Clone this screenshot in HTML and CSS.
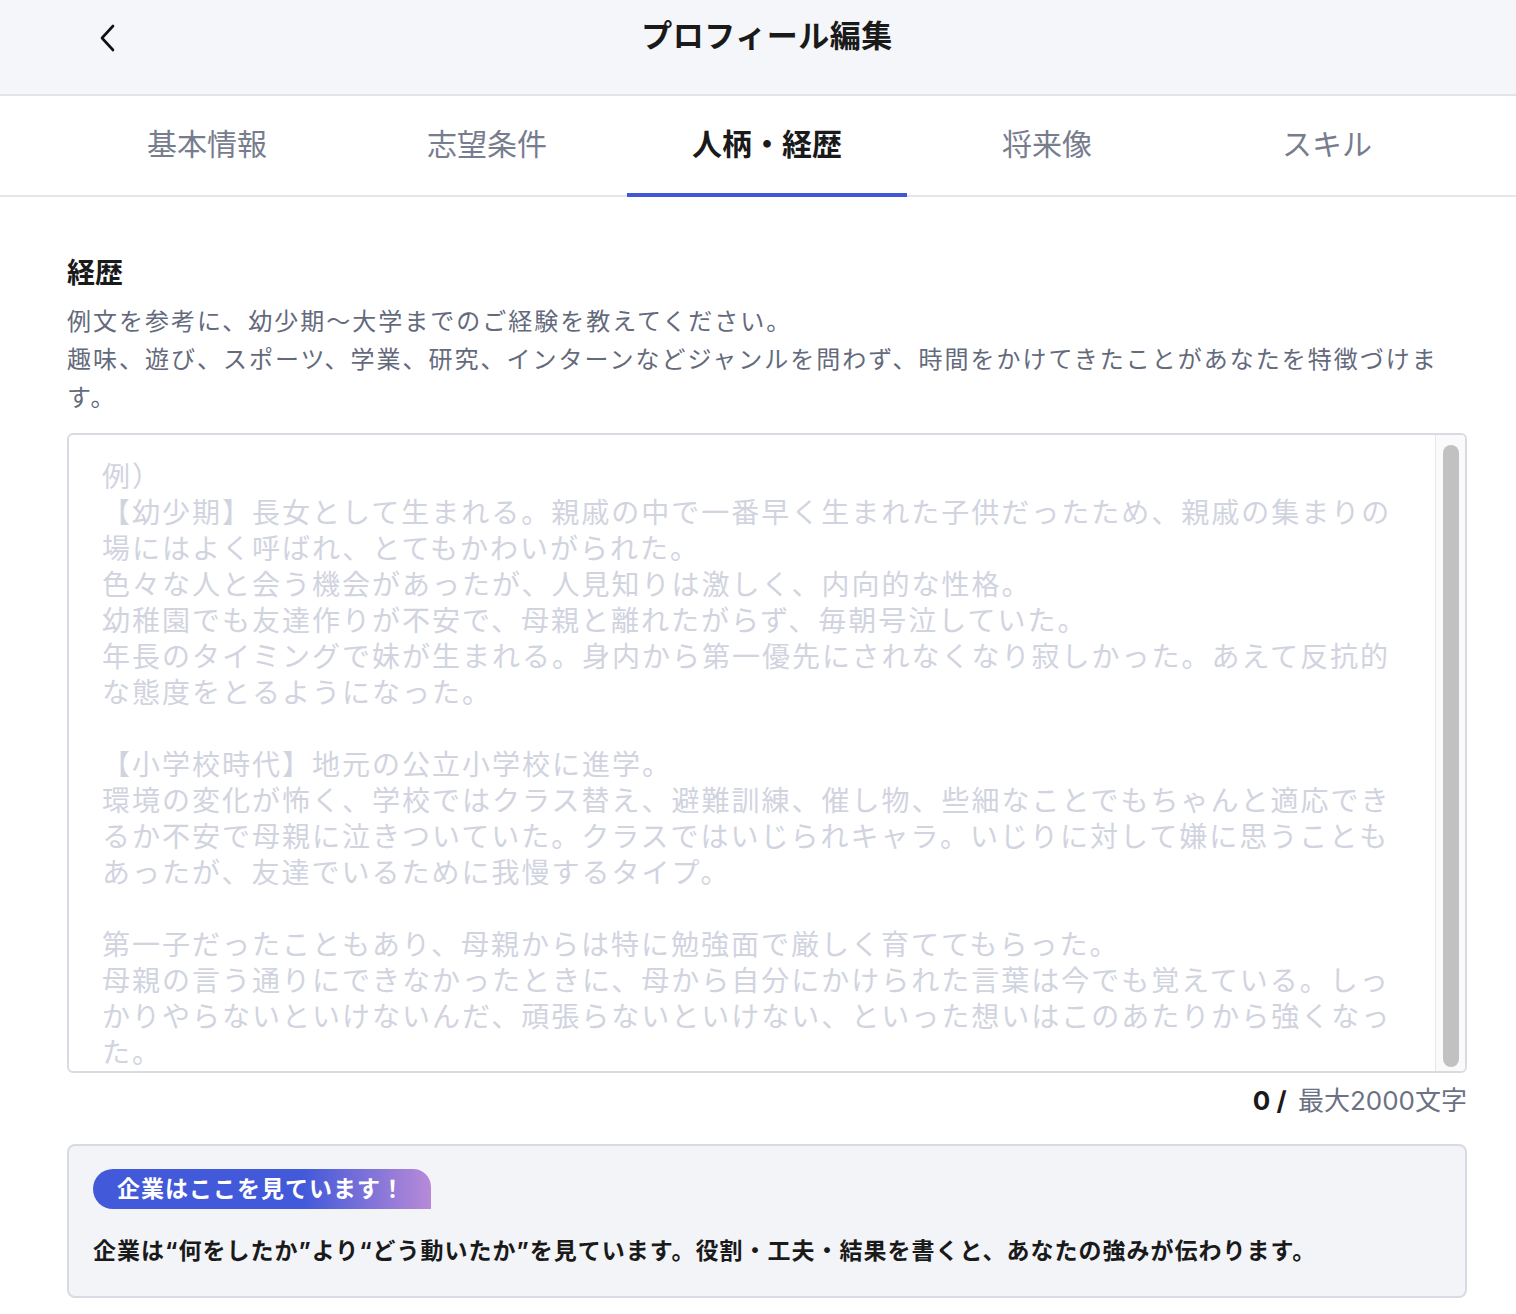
FILE: index.html
```html
<!DOCTYPE html>
<html lang="ja">
<head>
  <meta charset="UTF-8">
  <meta name="viewport" content="width=device-width, initial-scale=1.0">
  <title>プロフィール編集</title>
  <link rel="stylesheet" href="styles.css">
</head>
<body>
  <header class="topbar">
    <div class="topbar-inner">
      <a href="#" class="back" aria-label="戻る">
        <svg width="20" height="28" viewBox="0 0 20 28" fill="none">
          <path d="M15 2 L4 14 L15 26" stroke="#111" stroke-width="2.6" stroke-linecap="round" stroke-linejoin="round"/>
        </svg>
      </a>
      <h1 class="title">プロフィール編集</h1>
    </div>
  </header>

  <nav class="tabs">
    <div class="tabs-inner">
      <a href="#" class="tab">基本情報</a>
      <a href="#" class="tab">志望条件</a>
      <a href="#" class="tab active">人柄・経歴</a>
      <a href="#" class="tab">将来像</a>
      <a href="#" class="tab">スキル</a>
    </div>
  </nav>

  <main class="content">
    <h2 class="section-title">経歴</h2>
    <p class="lead">例文を参考に、幼少期〜大学までのご経験を教えてください。<br>趣味、遊び、スポーツ、学業、研究、インターンなどジャンルを問わず、時間をかけてきたことがあなたを特徴づけま<br>す。</p>

    <div class="field">
      <div class="field-text">例）<br>【幼少期】長女として生まれる。親戚の中で一番早く生まれた子供だったため、親戚の集まりの<br>場にはよく呼ばれ、とてもかわいがられた。<br>色々な人と会う機会があったが、人見知りは激しく、内向的な性格。<br>幼稚園でも友達作りが不安で、母親と離れたがらず、毎朝号泣していた。<br>年長のタイミングで妹が生まれる。身内から第一優先にされなくなり寂しかった。あえて反抗的<br>な態度をとるようになった。<br><br>【小学校時代】地元の公立小学校に進学。<br>環境の変化が怖く、学校ではクラス替え、避難訓練、催し物、些細なことでもちゃんと適応でき<br>るか不安で母親に泣きついていた。クラスではいじられキャラ。いじりに対して嫌に思うことも<br>あったが、友達でいるために我慢するタイプ。<br><br>第一子だったこともあり、母親からは特に勉強面で厳しく育ててもらった。<br>母親の言う通りにできなかったときに、母から自分にかけられた言葉は今でも覚えている。しっ<br>かりやらないといけないんだ、頑張らないといけない、といった想いはこのあたりから強くなっ<br>た。</div>
      <div class="scrollbar"><div class="thumb"></div></div>
    </div>
    <div class="counter"><strong>0 /</strong> 最大2000文字</div>

    <section class="hint">
      <span class="badge">企業はここを見ています！</span>
      <p class="hint-text">企業は“何をしたか”より“どう動いたか”を見ています。役割・工夫・結果を書くと、あなたの強みが伝わります。</p>
    </section>
  </main>
</body>
</html>
```

FILE: styles.css
```css
* {
  margin: 0;
  padding: 0;
  box-sizing: border-box;
}

body {
  font-family: 'Inter', 'Noto Sans CJK JP', sans-serif;
  background: #ffffff;
  color: #1a1a1a;
}

a {
  text-decoration: none;
  color: inherit;
}

.topbar {
  background: #f5f6fa;
  border-bottom: 2px solid #e1e5ea;
  height: 96px;
}

.topbar-inner {
  width: 1400px;
  margin-left: 67px;
  height: 67px;
  display: flex;
  align-items: center;
  justify-content: center;
  position: relative;
}

.back {
  position: absolute;
  left: 31px;
  top: 24px;
  display: flex;
}

.title {
  font-size: 31px;
  font-weight: 700;
  letter-spacing: 0.5px;
  color: #1a1a1a;
}

.tabs {
  border-bottom: 2px solid #e3e7eb;
}

.tabs-inner {
  width: 1400px;
  margin-left: 67px;
  display: flex;
}

.tab {
  flex: 1;
  height: 101px;
  display: flex;
  align-items: center;
  justify-content: center;
  padding-bottom: 6px;
  font-size: 30px;
  color: #787d8e;
  border-bottom: 4px solid transparent;
  margin-bottom: -2px;
}

.tab.active {
  color: #1a1a1a;
  font-weight: 700;
  border-bottom-color: #4058d8;
}

.content {
  width: 1400px;
  margin-left: 67px;
  padding-top: 56px;
  padding-bottom: 16px;
}

.section-title {
  font-size: 28px;
  font-weight: 700;
  line-height: 40px;
  color: #1a1a1a;
}

.lead {
  margin-top: 10px;
  font-size: 24px;
  letter-spacing: 2px;
  line-height: 38px;
  color: #646a7c;
}

.field {
  margin-top: 16px;
  height: 640px;
  border: 2px solid #d8dbe3;
  border-radius: 6px;
  display: flex;
  overflow: hidden;
}

.field-text {
  flex: 1;
  padding: 24px 0 0 33px;
  font-size: 28px;
  letter-spacing: 2px;
  line-height: 36px;
  color: #d1d4df;
  white-space: nowrap;
  overflow: hidden;
}

.scrollbar {
  width: 30px;
  background: #fafafa;
  border-left: 1px solid #e6e6e9;
  padding: 10px 6px 4px 7px;
  display: flex;
}

.thumb {
  flex: 1;
  background: #c1c1c1;
  border-radius: 8px;
}

.counter {
  text-align: right;
  font-size: 26px;
  line-height: 36px;
  margin-top: 10px;
  color: #6c7183;
}

.counter strong {
  color: #1a1a1a;
  font-weight: 700;
  margin-right: 4px;
}

.hint {
  margin-top: 25px;
  background: #f3f4f8;
  border: 2px solid #d8dbe3;
  border-radius: 8px;
  padding: 23px 24px 25px;
}

.badge {
  display: inline-block;
  height: 40px;
  line-height: 40px;
  padding: 0 26px 0 24px;
  border-radius: 20px 18px 0 20px;
  background: linear-gradient(90deg, #4259d9 0%, #4259d9 62%, #b88ad8 100%);
  color: #ffffff;
  font-size: 23px;
  font-weight: 700;
  letter-spacing: 1px;
}

.hint-text {
  margin-top: 22px;
  font-size: 23px;
  font-weight: 700;
  letter-spacing: 1px;
  line-height: 40px;
  color: #1a1a1a;
}
```
